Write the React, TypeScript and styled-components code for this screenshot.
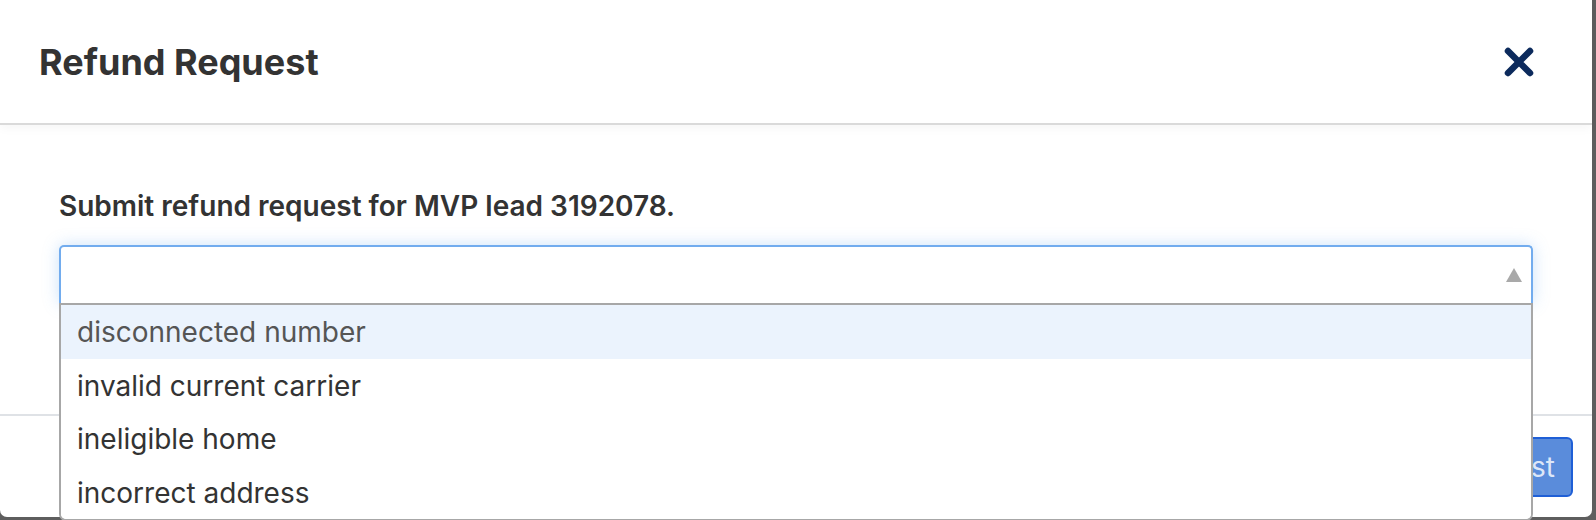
import React from 'react';
import styled, { createGlobalStyle } from 'styled-components';

const GlobalStyle = createGlobalStyle`
  html, body {
    margin: 0;
    padding: 0;
    background: #5e5e5e;
  }
  body {
    font-family: Inter, 'Liberation Sans', sans-serif;
    color: #333;
  }
`;

const Backdrop = styled.div`
  width: 1596px;
  height: 520px;
  overflow: hidden;
  background: #5e5e5e;
`;

const Modal = styled.div`
  width: 1592px;
  height: 517px;
  background: #fff;
  border-radius: 0 0 7px 7px;
  display: flex;
  flex-direction: column;
`;

const Header = styled.div`
  height: 123px;
  flex: none;
  display: flex;
  align-items: center;
  justify-content: space-between;
  padding: 0 58px 0 39px;
  border-bottom: 2px solid #dadada;
  box-shadow: 0 3px 10px rgba(0, 0, 0, 0.04);
  position: relative;
  z-index: 1;
`;

const Title = styled.h1`
  margin: 0;
  font-size: 36px;
  font-weight: 700;
  color: #333;
`;

const CloseButton = styled.button`
  border: none;
  background: none;
  padding: 0;
  width: 30px;
  height: 30px;
  display: flex;
  align-items: center;
  justify-content: center;
  cursor: pointer;
`;

const Body = styled.div`
  height: 289px;
  flex: none;
  padding: 64px 59px 0;
  box-sizing: border-box;
`;

const Prompt = styled.p`
  margin: 0 0 22px;
  font-size: 28px;
  line-height: 34px;
  font-weight: 600;
  color: #333;
`;

const SelectWrap = styled.div`
  position: relative;
  z-index: 2;
`;

const SelectBox = styled.div`
  height: 58px;
  box-sizing: border-box;
  border: 2px solid #72acee;
  border-bottom: none;
  border-radius: 5px 5px 0 0;
  box-shadow: 0 0 16px rgba(102, 170, 240, 0.35);
  background: #fff;
  display: flex;
  align-items: center;
  justify-content: flex-end;
  padding-right: 9px;
`;

const Menu = styled.ul`
  position: absolute;
  top: 100%;
  left: 0;
  right: 0;
  margin: 0;
  padding: 0;
  list-style: none;
  background: #fff;
  border: 2px solid #a7a7a7;
  border-radius: 0 0 7px 7px;
  overflow: hidden;
`;

const Option = styled.li<{ $active?: boolean }>`
  height: 53.5px;
  line-height: 54px;
  padding: 0 16px;
  font-size: 28px;
  color: ${(p) => (p.$active ? '#555' : '#333')};
  background: ${(p) => (p.$active ? '#ebf3fd' : '#fff')};
`;

const Footer = styled.div`
  flex: 1;
  border-top: 2px solid #dfe2e6;
  display: flex;
  align-items: center;
  justify-content: flex-end;
  padding: 0 19px;
`;

const SubmitButton = styled.button`
  height: 60px;
  padding: 0 16px;
  font-family: Inter, 'Liberation Sans', sans-serif;
  font-size: 28px;
  color: #dde7f8;
  background: #5a8cdb;
  border: 2px solid #1f5fd6;
  border-radius: 6px;
`;

const options = [
  'disconnected number',
  'invalid current carrier',
  'ineligible home',
  'incorrect address',
];

const App = function () {
  return (
    <Backdrop>
      <GlobalStyle />
      <Modal>
        <Header>
          <Title>Refund Request</Title>
          <CloseButton aria-label="Close">
            <svg width="30" height="30" viewBox="0 0 30 30">
              <path d="M4 4 L26 26 M26 4 L4 26" stroke="#0c2a5c" strokeWidth="6.5" strokeLinecap="round" />
            </svg>
          </CloseButton>
        </Header>
        <Body>
          <Prompt>Submit refund request for MVP lead 3192078.</Prompt>
          <SelectWrap>
            <SelectBox>
              <svg width="16" height="14" viewBox="0 0 16 14">
                <polygon points="8,0 16,14 0,14" fill="#a9a9a9" />
              </svg>
            </SelectBox>
            <Menu>
              {options.map((o, i) => (
                <Option key={o} $active={i === 0}>{o}</Option>
              ))}
            </Menu>
          </SelectWrap>
        </Body>
        <Footer>
          <SubmitButton>Submit Request</SubmitButton>
        </Footer>
      </Modal>
    </Backdrop>
  );
};

export default App;
